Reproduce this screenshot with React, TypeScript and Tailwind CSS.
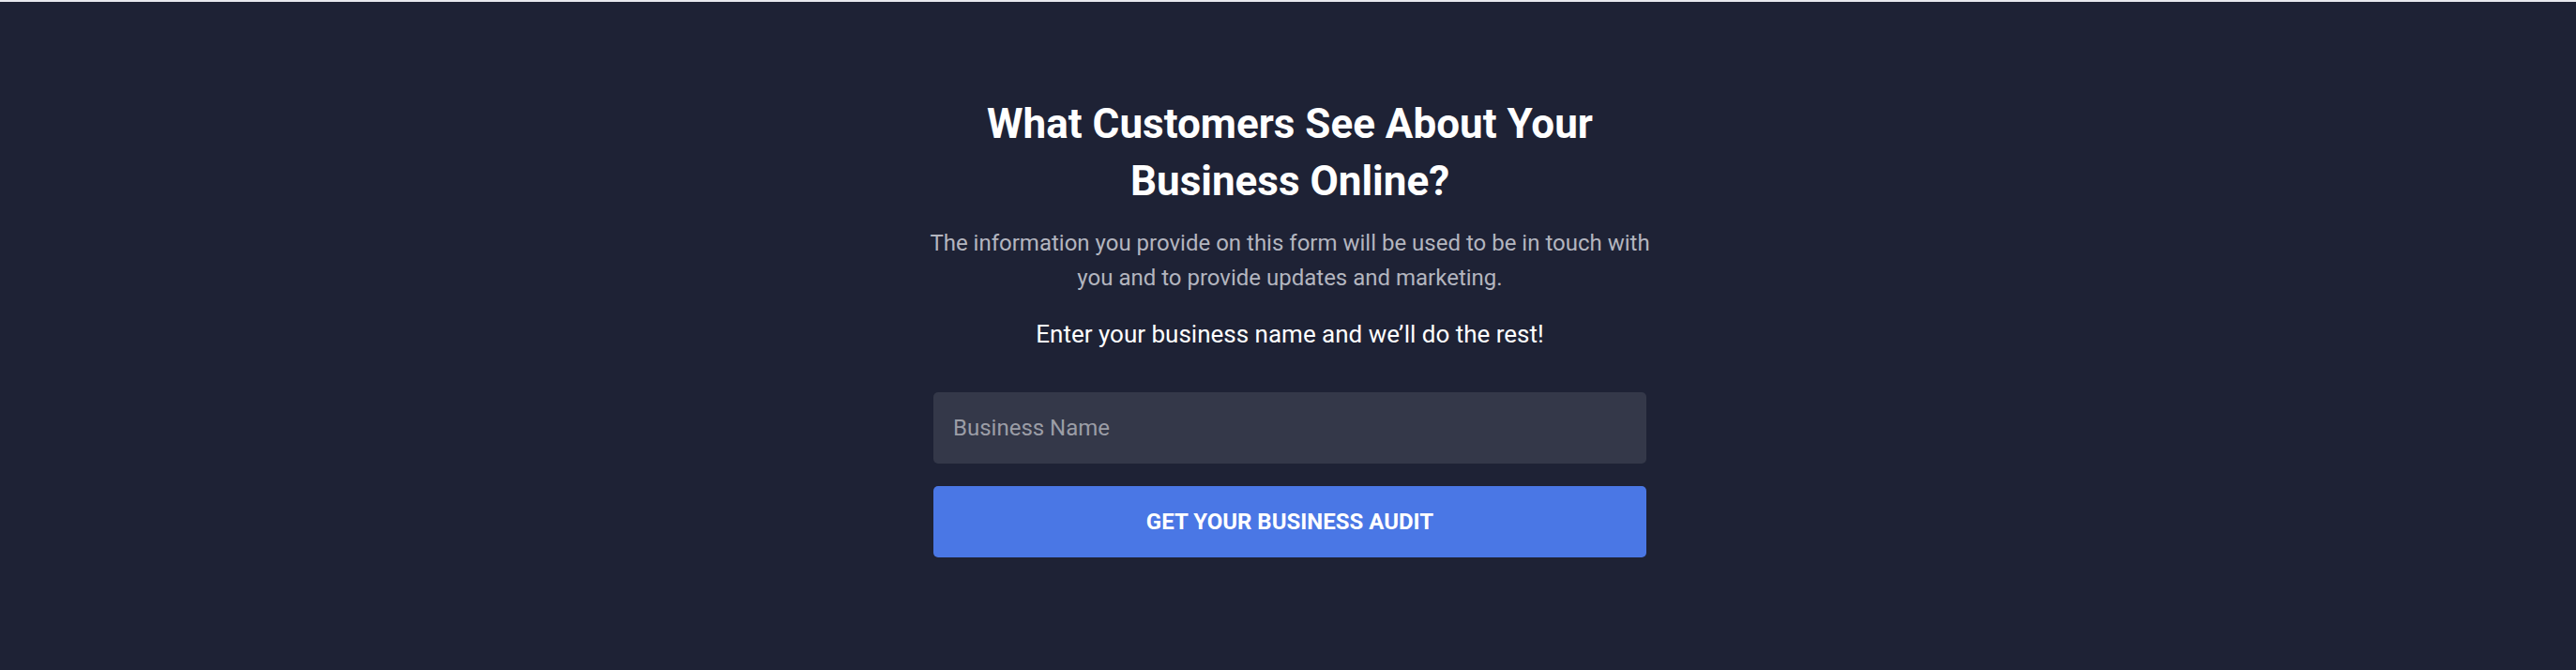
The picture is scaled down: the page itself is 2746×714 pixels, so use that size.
import React, {useState} from "react";

export default function App() {
    const [businessName, setBusinessName] = useState("");

    return (
        <div className="min-h-[714px] bg-[#1e2235] font-['Roboto','Liberation_Sans',sans-serif]">
            <div className="h-[2px] bg-[#e8e9ee]"/>
            <section className="flex flex-col items-center pt-[100px] pb-[120px] pl-[4px]">
                <h1 className="max-w-[700px] text-center text-[44px] leading-[61px] font-bold text-white">
                    What Customers See About Your Business Online?
                </h1>

                <p className="mt-[17px] max-w-[790px] text-center text-[24px] leading-[37px] text-[#b3b5bf]">
                    The information you provide on this form will be used to be in touch with you and to provide
                    updates and marketing.
                </p>

                <p className="mt-[23px] text-center text-[26px] leading-[36px] text-white">
                    Enter your business name and we’ll do the rest!
                </p>

                <form
                    className="mt-[44px] flex w-[760px] flex-col gap-[24px]"
                    onSubmit={(e) => e.preventDefault()}
                >
                    <input
                        type="text"
                        value={businessName}
                        onChange={(e) => setBusinessName(e.target.value)}
                        placeholder="Business Name"
                        className="h-[76px] w-full rounded-[5px] bg-[#343849] px-[21px] text-[24px] text-white placeholder:text-[#9b9da6] outline-none"
                    />
                    <button
                        type="submit"
                        className="h-[76px] w-full rounded-[5px] bg-[#4a77e5] text-[24px] font-bold uppercase text-white"
                    >
                        Get Your Business Audit
                    </button>
                </form>
            </section>
        </div>
    );
}
